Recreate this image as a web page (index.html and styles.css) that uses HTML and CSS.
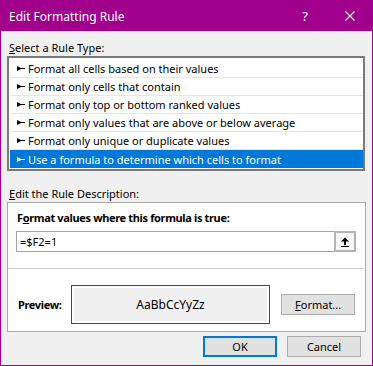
FILE: index.html
```html
<!DOCTYPE html>
<html>
<head>
<meta charset="utf-8">
<link rel="stylesheet" href="styles.css">
</head>
<body>
<div class="window">
  <div class="titlebar">
    <div class="title">Edit Formatting Rule</div>
    <div class="tb-btn help">?</div>
    <div class="tb-btn close">
      <svg width="10" height="10" viewBox="0 0 10 10"><path d="M0.5 0.5 L9.5 9.5 M9.5 0.5 L0.5 9.5" stroke="#fff" stroke-width="1.1" fill="none"/></svg>
    </div>
  </div>
  <div class="content">
    <div class="label"><span class="mn">S</span>elect a Rule Type:</div>
    <div class="list">
      <div class="rule"><svg class="arr" width="8" height="5" viewBox="0 0 8 5"><path d="M0 0 L4 2 L8 2 L8 3 L4 3 L0 5 Z"/></svg><span>Format all cells based on their values</span></div>
      <div class="rule"><svg class="arr" width="8" height="5" viewBox="0 0 8 5"><path d="M0 0 L4 2 L8 2 L8 3 L4 3 L0 5 Z"/></svg><span>Format only cells that contain</span></div>
      <div class="rule"><svg class="arr" width="8" height="5" viewBox="0 0 8 5"><path d="M0 0 L4 2 L8 2 L8 3 L4 3 L0 5 Z"/></svg><span>Format only top or bottom ranked values</span></div>
      <div class="rule"><svg class="arr" width="8" height="5" viewBox="0 0 8 5"><path d="M0 0 L4 2 L8 2 L8 3 L4 3 L0 5 Z"/></svg><span>Format only values that are above or below average</span></div>
      <div class="rule"><svg class="arr" width="8" height="5" viewBox="0 0 8 5"><path d="M0 0 L4 2 L8 2 L8 3 L4 3 L0 5 Z"/></svg><span>Format only unique or duplicate values</span></div>
      <div class="rule selected"><svg class="arr" width="8" height="5" viewBox="0 0 8 5"><path d="M0 0 L4 2 L8 2 L8 3 L4 3 L0 5 Z"/></svg><span>Use a formula to determine which cells to format</span></div>
    </div>
    <div class="label label-desc"><span class="mn">E</span>dit the Rule Description:</div>
    <div class="desc">
      <div class="desc-top">
        <div class="formula-label">F<span class="mn">o</span>rmat values where this formula is true:</div>
        <div class="formula-row">
          <div class="field">=$F2=1</div>
          <div class="ref-btn">
            <svg width="10" height="12" viewBox="0 0 10 12"><path d="M1 5.5 L5 1.5 L9 5.5 Z M4 5 H6 V9 H4 Z M1 10 H9 V11 H1 Z" fill="#000"/></svg>
          </div>
        </div>
      </div>
      <div class="sep"></div>
      <div class="preview-row">
        <div class="preview-label">Preview:</div>
        <div class="preview-box">AaBbCcYyZz</div>
        <div class="btn format-btn"><span class="mn">F</span>ormat...</div>
      </div>
    </div>
    <div class="footer">
      <div class="btn ok">OK</div>
      <div class="btn">Cancel</div>
    </div>
  </div>
</div>
</body>
</html>
```
FILE: styles.css
```css
* { box-sizing: border-box; }
html, body { margin: 0; padding: 0; }
body {
  font-family: "Noto Sans", "Open Sans", sans-serif;
  font-size: 11px;
  color: #000;
  background: #f0f0f0;
}
.window {
  width: 373px;
  height: 366px;
  border: 1px solid #a0008b;
  border-top: 0;
  background: #f0f0f0;
  display: flex;
  flex-direction: column;
  overflow: hidden;
}
.titlebar {
  height: 31px;
  margin: 0 -1px;
  background: #a0008b;
  color: #fff;
  display: flex;
  align-items: center;
  padding-left: 9px;
  flex-shrink: 0;
}
.title {
  flex: 1;
  font-size: 12px;
  padding-top: 1px;
}
.tb-btn {
  width: 46px;
  height: 31px;
  display: flex;
  align-items: center;
  justify-content: center;
}
.help {
  font-size: 13px;
  padding-left: 2px;
}
.close svg { display: block; }
.content {
  padding: 9px 7px 0 6px;
  display: flex;
  flex-direction: column;
}
.label {
  height: 16px;
  line-height: 16px;
  padding-left: 2px;
}
.mn { text-decoration: underline; }
.list {
  border: 2px solid #7a7a7a;
  background: #fff;
  padding: 2px 0 1px 1px;
}
.rule {
  height: 18px;
  border-bottom: 1px solid #e6e6e6;
  display: flex;
  align-items: center;
  padding-left: 7px;
  gap: 3px;
  white-space: nowrap;
}
.rule .arr { fill: #000; flex-shrink: 0; }
.rule.selected {
  background: #0078d7;
  color: #fff;
  border-bottom: 0;
}
.rule.selected .arr { fill: #fff; }
.label-desc { margin-top: 15px; }
.desc {
  border: 1px solid #a9a9a9;
  background: #fff;
  margin-right: -1px;
}
.desc-top {
  padding: 7px 9px 16px 8px;
}
.formula-label {
  font-weight: bold;
  height: 16px;
  line-height: 16px;
  padding-left: 1px;
  letter-spacing: -0.35px;
  white-space: nowrap;
}
.formula-row {
  margin-top: 5px;
  height: 21px;
  display: flex;
}
.field {
  flex: 1;
  border: 1px solid #a5a5a5;
  border-right: 0;
  padding-left: 3px;
  line-height: 19px;
}
.ref-btn {
  width: 22px;
  height: 21px;
  border: 2px solid #b4b4b4;
  background: #f7f7f7;
  display: flex;
  align-items: center;
  justify-content: center;
}
.ref-btn svg { display: block; }
.sep {
  height: 1px;
  background: #cdcdcd;
  margin: 0 1px 0 0;
}
.preview-row {
  display: flex;
  align-items: center;
  padding: 16px 10px 7px 9px;
}
.preview-label {
  width: 54px;
  font-weight: bold;
  padding-left: 1px;
  letter-spacing: -0.35px;
}
.preview-box {
  width: 200px;
  height: 39px;
  border: 1px solid #474747;
  background: #f0f0f0;
  box-shadow: inset 0 0 0 2px #fff;
  display: flex;
  align-items: center;
  justify-content: center;
  font-size: 12px;
}
.btn {
  width: 74px;
  height: 21px;
  border: 1px solid #adadad;
  background: #e1e1e1;
  display: flex;
  align-items: center;
  justify-content: center;
}
.format-btn { margin-left: 11px; }
.footer {
  margin-top: 4px;
  display: flex;
  justify-content: flex-end;
  gap: 10px;
  padding-right: 4px;
}
.ok { border: 2px solid #0078d7; }
```
